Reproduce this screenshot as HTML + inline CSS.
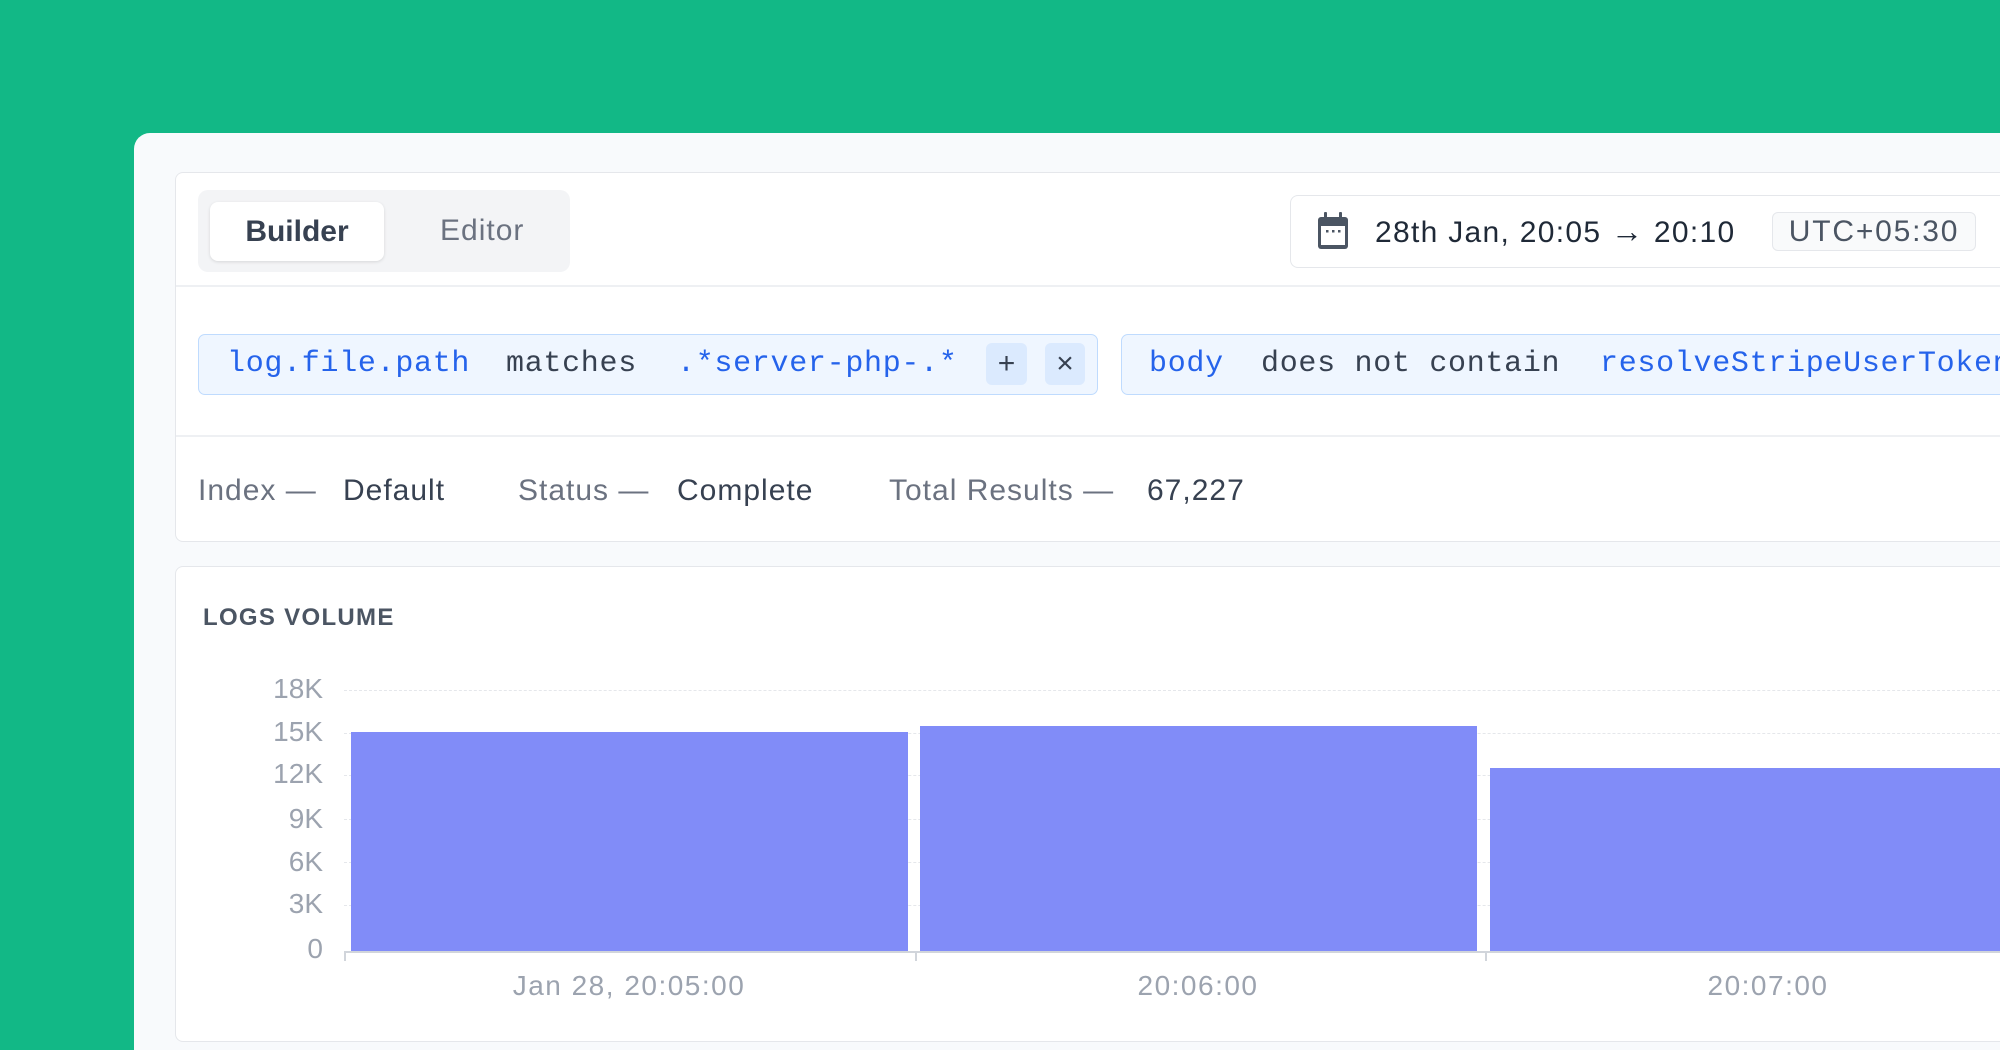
<!DOCTYPE html>
<html><head><meta charset="utf-8"><style>
*{margin:0;padding:0;box-sizing:border-box}
html{width:2000px;height:1050px;overflow:hidden}
body{width:2000px;height:1050px;overflow:hidden;background:#12b886;font-family:"Liberation Sans",sans-serif;position:relative}
.abs{position:absolute}
.panel{left:134px;top:133px;width:1866px;height:917px;background:#f8fafc;border-radius:16px 0 0 0}
.card{left:175px;top:172px;width:1825px;height:370px;background:#fff;border:1.5px solid #e5e7eb;border-right:none;border-radius:8px 0 0 8px}
.card2{left:175px;top:566px;width:1825px;height:476px;background:#fff;border:1.5px solid #e5e7eb;border-right:none;border-radius:8px 0 0 8px}
.hl{height:2px;background:#eef0f3}
.seg{left:198px;top:190px;width:372px;height:82px;background:#f3f4f6;border-radius:10px}
.btn{left:210px;top:202px;width:174px;height:59px;background:#fff;border-radius:8px;box-shadow:0 1px 3px rgba(0,0,0,.12);font-weight:700;font-size:30px;color:#374151;text-align:center;line-height:59px}
.t{font-size:30px;line-height:40px;white-space:nowrap;letter-spacing:1px}
.mono{font-family:"Liberation Mono",monospace;font-size:30px;line-height:40px;white-space:nowrap;letter-spacing:0.7px}
.chip{background:#eff6ff;border:1.5px solid #bfdbfe;border-radius:7px}
.sq{background:#dbeafe;border-radius:6px;color:#374151;text-align:center;font-size:30px;line-height:42px}
.y{font-size:28px;color:#9ca3af;width:80px;text-align:right;left:243px}
.bar{background:#818cf8}
.gl{left:344px;width:1656px;border-top:1.5px dashed #e5e7eb}
.xl{font-size:28px;color:#9ca3af;white-space:nowrap;transform:translateX(-50%);letter-spacing:1.5px}
</style></head><body>
<div class="abs panel"></div>
<div class="abs card"></div>
<div class="abs hl" style="left:176px;top:285px;width:1824px"></div>
<div class="abs hl" style="left:176px;top:435px;width:1824px"></div>
<div class="abs seg"></div>
<div class="abs btn">Builder</div>
<div class="abs t" style="left:440px;top:211px;color:#6b7280">Editor</div>

<div class="abs" style="left:1290px;top:195px;width:710px;height:73px;border:1.5px solid #e5e7eb;border-right:none;border-radius:8px 0 0 8px;background:#fff"></div>
<svg class="abs" style="left:1315px;top:211px" width="36" height="40" viewBox="0 0 36 40"><rect x="3" y="6" width="30" height="32" rx="3" fill="#4b5563"/><rect x="6" y="15" width="24" height="19" fill="#fff"/><rect x="9" y="1" width="3" height="8" rx="1" fill="#4b5563"/><rect x="24" y="1" width="3" height="8" rx="1" fill="#4b5563"/><rect x="11" y="19" width="2.5" height="2.5" fill="#4b5563"/><rect x="17" y="19" width="2.5" height="2.5" fill="#4b5563"/><rect x="23" y="19" width="2.5" height="2.5" fill="#4b5563"/></svg>
<div class="abs t" style="left:1375px;top:211px;color:#1f2937;letter-spacing:1.3px">28th Jan, 20:05 <span style="font-size:32px">→</span> 20:10</div>
<div class="abs t" style="left:1772px;top:212px;width:204px;height:39px;line-height:37px;border:1.5px solid #e5e7eb;border-radius:6px;background:#f9fafb;color:#4b5563;text-align:center;letter-spacing:1.8px">UTC+05:30</div>

<div class="abs chip" style="left:198px;top:334px;width:900px;height:61px"></div>
<div class="abs mono" style="left:227px;top:344px;color:#2563eb">log.file.path</div>
<div class="abs mono" style="left:506px;top:344px;color:#374151">matches</div>
<div class="abs mono" style="left:677px;top:344px;color:#2563eb">.*server-php-.*</div>
<div class="abs sq" style="left:986px;top:343px;width:41px;height:42px">+</div>
<div class="abs sq" style="left:1045px;top:343px;width:40px;height:42px">×</div>
<div class="abs chip" style="left:1121px;top:334px;width:900px;height:61px"></div>
<div class="abs mono" style="left:1149px;top:344px;color:#2563eb">body</div>
<div class="abs mono" style="left:1261px;top:344px;color:#374151">does not contain</div>
<div class="abs mono" style="left:1600px;top:344px;color:#2563eb">resolveStripeUserToken</div>

<div class="abs t" style="left:198px;top:471px;color:#6b7280">Index —</div>
<div class="abs t" style="left:343px;top:471px;color:#374151">Default</div>
<div class="abs t" style="left:518px;top:471px;color:#6b7280">Status —</div>
<div class="abs t" style="left:677px;top:471px;color:#374151">Complete</div>
<div class="abs t" style="left:889px;top:471px;color:#6b7280">Total Results —</div>
<div class="abs t" style="left:1147px;top:471px;color:#374151">67,227</div>

<div class="abs card2"></div>
<div class="abs" style="left:203px;top:604px;font-size:24px;font-weight:700;color:#4b5563;letter-spacing:1.3px">LOGS VOLUME</div>

<div class="abs gl" style="top:690px"></div>
<div class="abs gl" style="top:733px"></div>
<div class="abs gl" style="top:775px"></div>
<div class="abs gl" style="top:819px"></div>
<div class="abs gl" style="top:862px"></div>
<div class="abs gl" style="top:905px"></div>
<div class="abs y" style="top:673px">18K</div>
<div class="abs y" style="top:716px">15K</div>
<div class="abs y" style="top:758px">12K</div>
<div class="abs y" style="top:803px">9K</div>
<div class="abs y" style="top:846px">6K</div>
<div class="abs y" style="top:888px">3K</div>
<div class="abs y" style="top:933px">0</div>
<div class="abs bar" style="left:351px;top:732px;width:557px;height:219px"></div>
<div class="abs bar" style="left:920px;top:726px;width:557px;height:225px"></div>
<div class="abs bar" style="left:1490px;top:768px;width:510px;height:183px"></div>
<div class="abs" style="left:344px;top:951px;width:1656px;height:2px;background:#d1d5db"></div>
<div class="abs" style="left:344px;top:951px;width:2px;height:10px;background:#d1d5db"></div>
<div class="abs" style="left:915px;top:951px;width:2px;height:10px;background:#d1d5db"></div>
<div class="abs" style="left:1485px;top:951px;width:2px;height:10px;background:#d1d5db"></div>
<div class="abs xl" style="left:629px;top:970px">Jan 28, 20:05:00</div>
<div class="abs xl" style="left:1198px;top:970px">20:06:00</div>
<div class="abs xl" style="left:1768px;top:970px">20:07:00</div>
</body></html>
